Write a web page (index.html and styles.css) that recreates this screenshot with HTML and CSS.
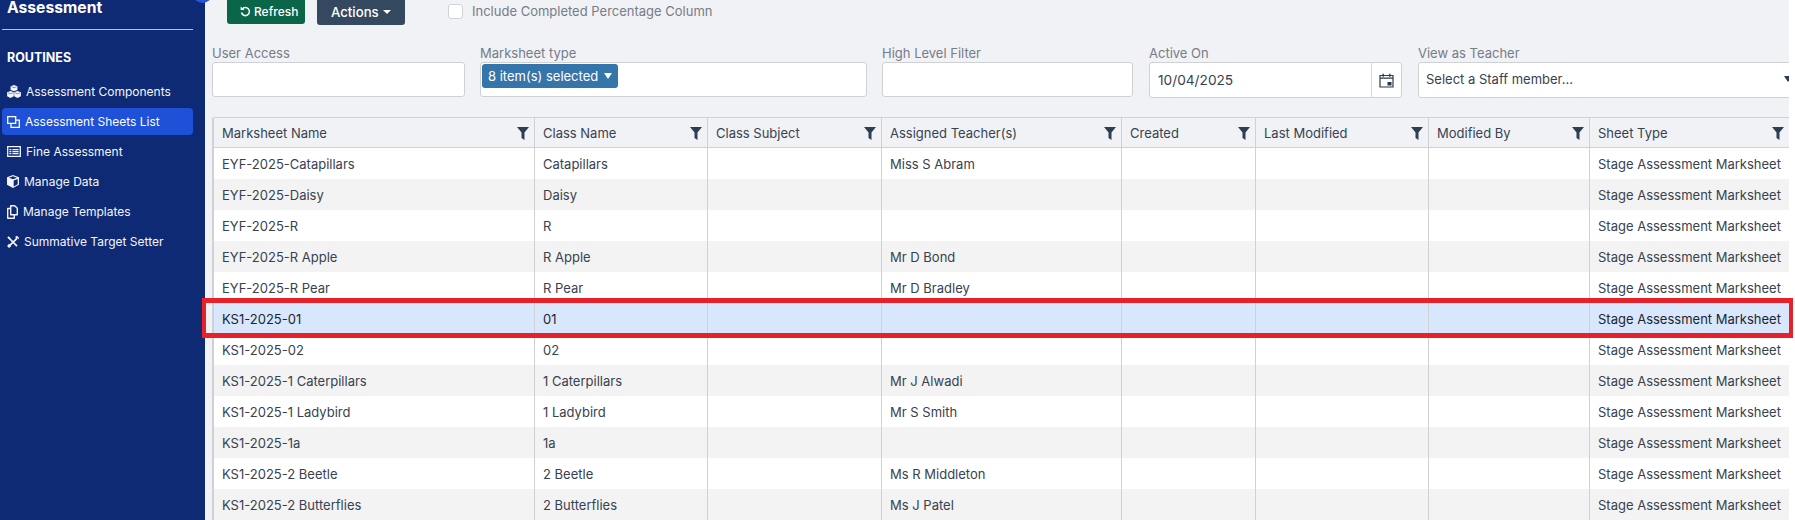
FILE: index.html
```html
<!DOCTYPE html>
<html lang="en">
<head>
<meta charset="utf-8">
<title>Assessment Sheets List</title>
<link rel="stylesheet" href="styles.css">
</head>
<body>
<div class="app">
  <aside class="sidebar">
    <div class="brand">Assessment</div>
    <div class="section-title">ROUTINES</div>
    <nav class="nav">
      <a class="nav-item"><svg class="nav-icon" width="14" height="13" viewBox="0 0 14 13"><path fill="currentColor" d="M7 0l3.400 1.300v3.700L7 6.300 3.600 5V1.300zM3.500 6l3.300 1.300v4L3.500 13 .1 11.300v-4zM10.500 6l3.400 1.300v4L10.500 13l-3.300-1.700v-4z"/><path fill="none" stroke="#0f2a75" stroke-width=".5" d="M4.500 1.700L7 2.700l2.500-1M1 7.800l2.500 1 2.400-1M8.100 7.800l2.400 1 2.500-1"/></svg><span>Assessment Components</span></a>
      <a class="nav-item active"><svg class="nav-icon" width="13" height="12" viewBox="0 0 13 12"><path fill="none" stroke="currentColor" stroke-width="1.300" d="M.7.700h8v6.600h-8zM4 7.400v3.900h8.300V4.200H8.700"/></svg><span>Assessment Sheets List</span></a>
      <a class="nav-item"><svg class="nav-icon" width="14" height="11" viewBox="0 0 14 11"><path fill="none" stroke="currentColor" stroke-width="1.300" d="M.7.700h12.600v9.600H.7z"/><path fill="currentColor" d="M2.400 3h2v1.200h-2zM5.400 3h6.200v1.200H5.400zM2.400 5h2v1.200h-2zM5.400 5h6.200v1.200H5.400zM2.400 7h2v1.200h-2zM5.400 7h6.200v1.200H5.400z"/></svg><span>Fine Assessment</span></a>
      <a class="nav-item"><svg class="nav-icon" width="12" height="13" viewBox="0 0 12 13"><path fill="currentColor" d="M6 0l6 2.200v7.600L6 13 0 9.800V2.200zM6 1.300L2 2.800l4 1.500 4-1.500zM6.700 5.500v5.900l4-2.200V4z"/></svg><span>Manage Data</span></a>
      <a class="nav-item"><svg class="nav-icon" width="11" height="14" viewBox="0 0 11 14"><path fill="none" stroke="currentColor" stroke-width="1.400" stroke-linejoin="round" d="M3.700.7h4l2.600 2.600v6.400H3.700zM3.500 3.500H.7v9.800h6.600v-3.300"/></svg><span>Manage Templates</span></a>
      <a class="nav-item"><svg class="nav-icon" width="12" height="12" viewBox="0 0 12 12"><path fill="none" stroke="currentColor" stroke-width="1.700" d="M2 2l8 8.200M10 2.300l-8 7.900"/><path fill="currentColor" d="M.3 1.600L1.600.3l2 2-1.300 1.300zM8.600.2a2.500 2.500 0 0 1 3.200 3.100L10 1.900 8.700 3zM2 7.700l2.300 2.300L2 11.900.1 10z"/></svg><span>Summative Target Setter</span></a>
    </nav>
  </aside>
  <span class="bubble"></span>
  <main class="main">
    <div class="toolbar">
      <button class="btn btn-green"><svg class="btn-icon" width="11" height="11" viewBox="0 0 11 11"><path fill="none" stroke="currentColor" stroke-width="1.500" d="M2.200 3.200A4 4 0 1 1 1.500 6.500"/><path fill="currentColor" d="M.6.600l4 3.400H.6z"/></svg>Refresh</button>
      <button class="btn btn-slate">Actions<span class="caret"></span></button>
      <label class="check"><span class="checkbox"></span>Include Completed Percentage Column</label>
    </div>
    <div class="filters">
      <div class="field f1"><div class="field-label">User Access</div><div class="input"></div></div>
      <div class="field f2"><div class="field-label">Marksheet type</div><div class="input input-pill"><span class="pill">8 item(s) selected<span class="pill-caret"></span></span></div></div>
      <div class="field f3"><div class="field-label">High Level Filter</div><div class="input"></div></div>
      <div class="field f4"><div class="field-label">Active On</div><div class="input input-date"><span class="date-value">10/04/2025</span><span class="date-addon"><svg width="15" height="15" viewBox="0 0 15 15"><path fill="none" stroke="#2b3a4e" stroke-width="1.200" d="M1 2.500h13v11.500H1z"/><path fill="#2b3a4e" d="M1 4.500h13v1.200H1zM3.500 .8h1.400v3H3.500zM10.100 .8h1.400v3h-1.400zM8.500 9h4v3.500h-4z"/></svg></span></div></div>
      <div class="field f5"><div class="field-label">View as Teacher</div><div class="input input-select"><span class="select-value">Select a Staff member...</span><span class="select-caret"></span></div></div>
    </div>
    <table class="grid">
      <colgroup><col class="c1"><col class="c2"><col class="c3"><col class="c4"><col class="c5"><col class="c6"><col class="c7"><col class="c8"></colgroup>
      <thead>
        <tr>
          <th><div class="th"><span>Marksheet Name</span><svg class="funnel" viewBox="0 0 12 13"><path d="M0 0h12L7.500 5.500V13L4.500 11V5.500z"/></svg></div></th>
          <th><div class="th"><span>Class Name</span><svg class="funnel" viewBox="0 0 12 13"><path d="M0 0h12L7.500 5.500V13L4.500 11V5.500z"/></svg></div></th>
          <th><div class="th"><span>Class Subject</span><svg class="funnel" viewBox="0 0 12 13"><path d="M0 0h12L7.500 5.500V13L4.500 11V5.500z"/></svg></div></th>
          <th><div class="th"><span>Assigned Teacher(s)</span><svg class="funnel" viewBox="0 0 12 13"><path d="M0 0h12L7.500 5.500V13L4.500 11V5.500z"/></svg></div></th>
          <th><div class="th"><span>Created</span><svg class="funnel" viewBox="0 0 12 13"><path d="M0 0h12L7.500 5.500V13L4.500 11V5.500z"/></svg></div></th>
          <th><div class="th"><span>Last Modified</span><svg class="funnel" viewBox="0 0 12 13"><path d="M0 0h12L7.500 5.500V13L4.500 11V5.500z"/></svg></div></th>
          <th><div class="th"><span>Modified By</span><svg class="funnel" viewBox="0 0 12 13"><path d="M0 0h12L7.500 5.500V13L4.500 11V5.500z"/></svg></div></th>
          <th><div class="th"><span>Sheet Type</span><svg class="funnel" viewBox="0 0 12 13"><path d="M0 0h12L7.500 5.500V13L4.500 11V5.500z"/></svg></div></th>
        </tr>
      </thead>
      <tbody>
        <tr><td>EYF-2025-Catapillars</td><td>Catapillars</td><td></td><td>Miss S Abram</td><td></td><td></td><td></td><td>Stage Assessment Marksheet</td></tr>
        <tr><td>EYF-2025-Daisy</td><td>Daisy</td><td></td><td></td><td></td><td></td><td></td><td>Stage Assessment Marksheet</td></tr>
        <tr><td>EYF-2025-R</td><td>R</td><td></td><td></td><td></td><td></td><td></td><td>Stage Assessment Marksheet</td></tr>
        <tr><td>EYF-2025-R Apple</td><td>R Apple</td><td></td><td>Mr D Bond</td><td></td><td></td><td></td><td>Stage Assessment Marksheet</td></tr>
        <tr><td>EYF-2025-R Pear</td><td>R Pear</td><td></td><td>Mr D Bradley</td><td></td><td></td><td></td><td>Stage Assessment Marksheet</td></tr>
        <tr class="selected"><td>KS1-2025-01</td><td>01</td><td></td><td></td><td></td><td></td><td></td><td>Stage Assessment Marksheet</td></tr>
        <tr><td>KS1-2025-02</td><td>02</td><td></td><td></td><td></td><td></td><td></td><td>Stage Assessment Marksheet</td></tr>
        <tr><td>KS1-2025-1 Caterpillars</td><td>1 Caterpillars</td><td></td><td>Mr J Alwadi</td><td></td><td></td><td></td><td>Stage Assessment Marksheet</td></tr>
        <tr><td>KS1-2025-1 Ladybird</td><td>1 Ladybird</td><td></td><td>Mr S Smith</td><td></td><td></td><td></td><td>Stage Assessment Marksheet</td></tr>
        <tr><td>KS1-2025-1a</td><td>1a</td><td></td><td></td><td></td><td></td><td></td><td>Stage Assessment Marksheet</td></tr>
        <tr><td>KS1-2025-2 Beetle</td><td>2 Beetle</td><td></td><td>Ms R Middleton</td><td></td><td></td><td></td><td>Stage Assessment Marksheet</td></tr>
        <tr><td>KS1-2025-2 Butterflies</td><td>2 Butterflies</td><td></td><td>Ms J Patel</td><td></td><td></td><td></td><td>Stage Assessment Marksheet</td></tr>
      </tbody>
    </table>
  </main>
  <div class="highlight"></div>
</div>
</body>
</html>
```

FILE: styles.css
```css
* { box-sizing: border-box; }
html, body { margin: 0; height: 100%; }
body { font-family: Inter, "Liberation Sans", sans-serif; font-size: 13px; color: #38424f; background: #fff; overflow: hidden; }
.app { position: relative; display: flex; width: 1795px; height: 520px; overflow: hidden; }

.sidebar { flex: 0 0 205px; background: #0f2a75; color: #fff; padding: 0 12px 0 2px; }
.brand { display: flex; align-items: flex-end; height: 30px; padding: 0 0 14px 5px; border-bottom: 1px solid #b9c4e2; font-size: 15.7px; font-weight: 700; line-height: 15px; }
.section-title { margin-top: 18px; padding-left: 5px; font-size: 12.5px; font-weight: 700; line-height: 20px; }
.nav { margin-top: 10px; display: flex; flex-direction: column; gap: 3px; }
.nav-item { display: flex; align-items: center; gap: 5px; height: 27px; padding-left: 5px; border-radius: 4px; color: #f3f5fb; font-size: 12px; line-height: 16px; }
.nav-item.active { background: #1e50d8; color: #fff; }
.nav-icon { flex: none; }
.bubble { position: absolute; left: 193px; top: -16px; width: 19px; height: 19px; border-radius: 50%; background: #2456dc; }

.main { flex: 0 0 1584px; padding: 0 0 0 7px; overflow: hidden; background: #f0f2f6; }
.toolbar { display: flex; align-items: flex-start; height: 53px; padding-left: 15px; margin-top: -8px; }
.btn { display: inline-flex; align-items: center; border: 0; color: #fff; font-family: inherit; border-radius: 3px; padding: 0; }
.btn-green { width: 78px; height: 32px; background: #0b6548; font-size: 12px; font-weight: 500; padding-left: 13px; padding-top: 6px; gap: 3px; }
.btn-slate { width: 88px; height: 33px; margin-left: 12px; background: #34485f; font-size: 13.2px; font-weight: 500; padding-left: 14px; padding-top: 7px; }
.btn-icon { flex: none; }
.caret { margin-left: 4px; border: 4px solid transparent; border-top-color: #fff; border-bottom: 0; }
.check { display: flex; align-items: center; margin: 12px 0 0 43px; color: #777c86; font-size: 13px; line-height: 15px; }
.checkbox { width: 15px; height: 15px; margin-right: 9px; background: #fff; border: 1px solid #cfd2d6; border-radius: 3px; }

.filters { display: flex; gap: 15px; }
.field { flex: none; }
.f1 { width: 253px; } .f2 { width: 387px; } .f3 { width: 251px; margin-right: 1px; } .f4 { width: 253px; margin-right: 1px; } .f5 { width: 383px; }
.field-label { height: 17px; color: #777c86; font-size: 13px; line-height: 17px; }
.input { display: flex; align-items: center; height: 35px; background: #fff; border: 1px solid #cfd1d5; border-radius: 3px; }
.input-pill { align-items: flex-start; padding: 1px; }
.pill { display: inline-flex; align-items: center; height: 24px; padding: 0 6px; background: #3675aa; color: #fff; border-radius: 3px; font-size: 13px; }
.pill-caret { margin-left: 6px; border: 4px solid transparent; border-top: 6px solid #fff; border-bottom: 0; }
.input-date { height: 36px; }
.date-value { flex: 1; padding-left: 8px; font-size: 13.7px; color: #38424f; }
.date-addon { display: flex; align-items: center; justify-content: center; width: 30px; height: 100%; border-left: 1px solid #d8dade; }
.input-select { height: 36px; justify-content: space-between; padding: 0 8px 0 7px; font-size: 13px; }
.select-value { margin-bottom: 2px; }
.select-caret { margin-bottom: 3px; border: 4px solid transparent; border-top: 6px solid #2b3a4e; border-bottom: 0; }

.grid { margin-top: 19px; width: 1577px; table-layout: fixed; border-collapse: separate; border-spacing: 0; border-left: 2px solid #cfd1d5; border-top: 1px solid #cfd1d5; border-right: 1px solid #cfd1d5; border-top-left-radius: 3px; }
.c1 { width: 321px; } .c2 { width: 173px; } .c3 { width: 174px; } .c4 { width: 240px; } .c5 { width: 134px; } .c6 { width: 173px; } .c7 { width: 161px; } .c8 { width: 199px; }
th { height: 30px; padding: 0; background: #f0f2f6; border-bottom: 1px solid #cfd1d5; border-right: 1px solid #cfd1d5; font-weight: 400; text-align: left; color: #38424f; }
th:last-child, td:last-child { border-right: 0; }
.th { display: flex; align-items: center; justify-content: space-between; padding: 1px 5px 0 8px; font-size: 13px; }
.funnel { width: 12px; height: 13px; fill: #2e3f55; flex: none; }
td { height: 31px; padding: 0 8px; border-right: 1px solid #cfd1d5; background: #fff; font-size: 13px; white-space: nowrap; overflow: hidden; }
tbody tr:nth-child(even) td { background: #f3f3f3; }
tbody tr.selected td { background: #d9e7fc; color: #1c2532; }

.highlight { position: absolute; left: 202px; top: 298px; width: 1591px; height: 40px; border: 5px solid #e8202a; border-left-width: 4px; border-right-width: 4px; pointer-events: none; }
```
